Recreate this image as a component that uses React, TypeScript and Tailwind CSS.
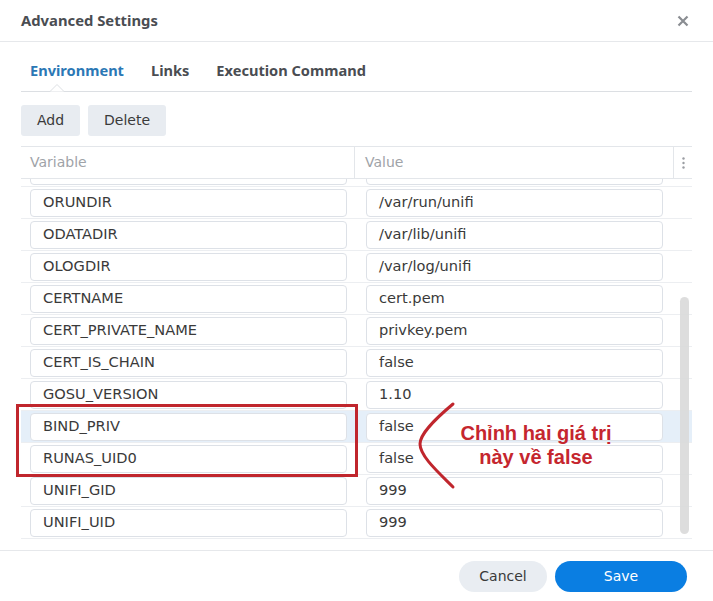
import React from 'react';

const rows: [string, string][] = [
  ['', ''],
  ['ORUNDIR', '/var/run/unifi'],
  ['ODATADIR', '/var/lib/unifi'],
  ['OLOGDIR', '/var/log/unifi'],
  ['CERTNAME', 'cert.pem'],
  ['CERT_PRIVATE_NAME', 'privkey.pem'],
  ['CERT_IS_CHAIN', 'false'],
  ['GOSU_VERSION', '1.10'],
  ['BIND_PRIV', 'false'],
  ['RUNAS_UID0', 'false'],
  ['UNIFI_GID', '999'],
  ['UNIFI_UID', '999'],
];

function Field({ value }: { value: string }) {
  return (
    <div className="h-[28px] w-full rounded-[4px] border border-[#dde1e7] bg-white pl-[12px] flex items-center text-[14.6px] text-[#3a3a3a] leading-none">
      {value}
    </div>
  );
}

export default function App() {
  return (
    <div
      className="relative w-[713px] h-[601px] bg-white overflow-hidden flex flex-col"
      style={{ fontFamily: '"DejaVu Sans", Verdana, sans-serif' }}
    >
      {/* header */}
      <div className="h-[42px] shrink-0 border-b border-[#e6e8eb] flex items-center justify-between pl-[21px] pr-[24px]">
        <span className="text-[14.8px] font-bold text-[#4a4d52]" style={{ fontFamily: '"Noto Sans", sans-serif' }}>
          Advanced Settings
        </span>
        <svg width="12" height="12" viewBox="0 0 12 12" className="text-[#8a8d92]">
          <path d="M1.5 1.5 L10.5 10.5 M10.5 1.5 L1.5 10.5" stroke="currentColor" strokeWidth="2.2" />
        </svg>
      </div>

      {/* tabs */}
      <div className="mx-[21px] mt-[17px] h-[33px] shrink-0 border-b border-[#dcdfe3] relative flex items-center gap-[27px] pl-[9px] pb-[8px] text-[14.6px] font-bold" style={{ fontFamily: '"Noto Sans", sans-serif' }}>
        <span className="text-[#2b78b5]">Environment</span>
        <span className="text-[#4a4d52]">Links</span>
        <span className="text-[#4a4d52]">Execution Command</span>
        <svg width="14" height="8" viewBox="0 0 14 8" className="absolute left-[29px] bottom-[-1px]">
          <path d="M0 7.5 L7 0.5 L14 7.5" fill="white" stroke="#dcdfe3" strokeWidth="1" />
        </svg>
      </div>

      {/* toolbar */}
      <div className="mx-[21px] mt-[13px] flex gap-[8px] shrink-0">
        <button className="h-[31px] w-[59px] rounded-[3px] bg-[#e8ecf1] text-[14px] text-[#3a3a3a]">Add</button>
        <button className="h-[31px] w-[78px] rounded-[3px] bg-[#e8ecf1] text-[14px] text-[#3a3a3a]">Delete</button>
      </div>

      {/* table */}
      <div className="mx-[21px] mt-[10px] shrink-0 border-t border-[#e3e6ea]">
        <div className="h-[32px] border-b border-[#e3e6ea] flex text-[14px] text-[#a0a3a8]">
          <div className="w-[334px] border-r border-[#e3e6ea] flex items-center pl-[9px]">Variable</div>
          <div className="w-[319px] border-r border-[#e3e6ea] flex items-center pl-[10px]">Value</div>
          <div className="flex-1 flex items-center justify-center">
            <svg width="3" height="12" viewBox="0 0 3 12">
              <circle cx="1.5" cy="1.5" r="1.2" fill="#9a9da2" />
              <circle cx="1.5" cy="6" r="1.2" fill="#9a9da2" />
              <circle cx="1.5" cy="10.5" r="1.2" fill="#9a9da2" />
            </svg>
          </div>
        </div>
        <div className="relative h-[361px] overflow-hidden">
          <div className="-mt-[24px]">
            {rows.map(([k, v], i) => (
              <div
                key={i}
                className={`h-[32px] border-b border-[#eceef1] flex items-center ${i === 8 ? 'bg-[#e5eff9]' : ''}`}
              >
                <div className="w-[334px] pl-[9px] pr-[8px]">
                  <Field value={k} />
                </div>
                <div className="w-[319px] pl-[11px] pr-[11px]">
                  <Field value={v} />
                </div>
              </div>
            ))}
          </div>
          <div className="absolute right-[3px] top-[118px] h-[237px] w-[9px] rounded-full bg-[#d9d9d9] opacity-90" />
        </div>
      </div>

      {/* footer */}
      <div className="mt-auto h-[51px] shrink-0 border-t border-[#e6e8eb] flex items-start justify-end gap-[8px] pr-[26px] pt-[10px]">
        <button className="h-[31px] w-[88px] rounded-full bg-[#e9edf2] text-[14px] text-[#3a3a3a]">Cancel</button>
        <button className="h-[31px] w-[132px] rounded-full bg-[#0a7ee2] text-[14px] text-white">Save</button>
      </div>

      {/* annotation */}
      <div className="absolute left-[16px] top-[404px] w-[342px] h-[73px] border-[3px] border-[#c0262d]" />
      <svg className="absolute left-[412px] top-[400px]" width="50" height="92" viewBox="0 0 50 92">
        <path d="M41 4 C 22 20, 8 34, 8 44 C 8 56, 26 72, 41 87" fill="none" stroke="#c0262d" strokeWidth="3" strokeLinecap="round" />
      </svg>
      <div
        className="absolute left-[450px] top-[421px] w-[172px] text-center text-[20px] font-bold leading-[24px] text-[#c5262e]"
        style={{ fontFamily: '"Liberation Sans", Arial, sans-serif' }}
      >
        Chỉnh hai giá trị
        <br />
        này về false
      </div>
    </div>
  );
}
